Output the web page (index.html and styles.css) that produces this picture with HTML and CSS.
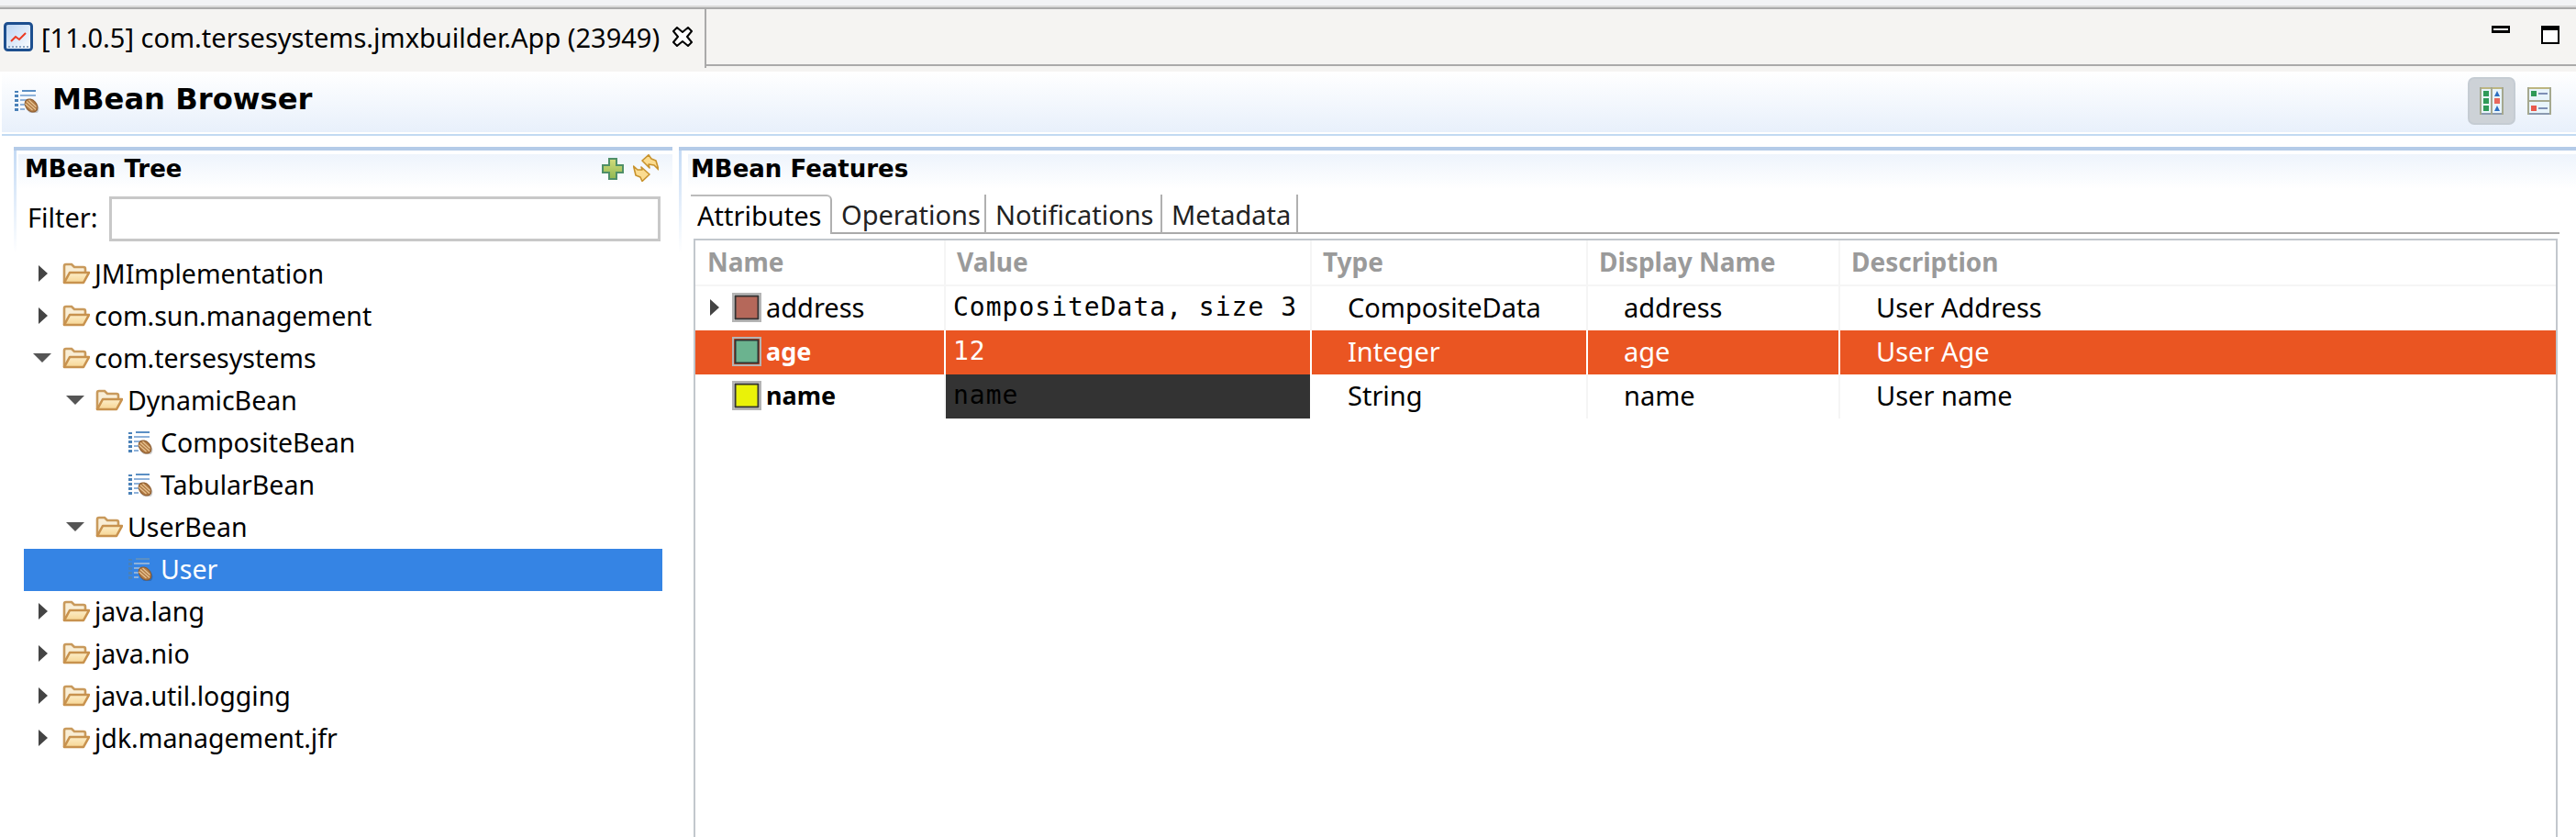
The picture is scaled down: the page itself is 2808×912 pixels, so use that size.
FILE: index.html
```html
<!DOCTYPE html>
<html lang="en">
<head>
<meta charset="utf-8">
<title>MBean Browser</title>
<link rel="stylesheet" href="styles.css">
</head>
<body>
<svg class="defs" width="0" height="0" aria-hidden="true">
  <defs>
    <linearGradient id="fold" x1="0" y1="0" x2="0" y2="1"><stop offset="0" stop-color="#fdeec9"/><stop offset="1" stop-color="#f6d593"/></linearGradient>
    <linearGradient id="chart" x1="0" y1="0" x2="1" y2="1"><stop offset="0" stop-color="#b9d3f2"/><stop offset="1" stop-color="#ffffff"/></linearGradient>
    <linearGradient id="plus" x1="0" y1="0" x2="0" y2="1"><stop offset="0" stop-color="#d3dc7c"/><stop offset="1" stop-color="#8fb850"/></linearGradient>
    <symbol id="folder" viewBox="0 0 30 24">
      <path d="M2 22V4q0-2 2-2h6l3 3h10q2 0 2 2v4" fill="#f9eed6" stroke="#c99a5c" stroke-width="2.6"/>
      <path d="M2 22l6-11h21l-6 11z" fill="url(#fold)" stroke="#c8924e" stroke-width="2.6" stroke-linejoin="round"/>
    </symbol>
    <symbol id="bean" viewBox="0 0 28 25">
      <g fill="#4a81b8">
        <rect x="8" y="0" width="15" height="2" fill="#5b8fc4"/><rect x="0" y="1" width="4" height="2"/>
        <rect x="0" y="5" width="4" height="3"/><rect x="6" y="5" width="17" height="2" fill="#8fb2da"/>
        <rect x="0" y="10" width="4" height="3"/><rect x="6" y="10" width="13" height="2" fill="#8fb2da"/>
        <rect x="0" y="15" width="4" height="3"/><rect x="6" y="15" width="5" height="2" fill="#8fb2da"/>
        <rect x="0" y="20" width="4" height="3"/><rect x="6" y="20" width="5" height="2" fill="#8fb2da"/>
      </g>
      <ellipse cx="19" cy="18.5" rx="6.5" ry="8.5" transform="rotate(-42 19 18.5)" fill="#000" opacity=".18"/>
      <ellipse cx="18" cy="17" rx="5.8" ry="8" transform="rotate(-42 18 17)" fill="#b07a44" stroke="#8d5c2f" stroke-width="1"/>
      <path d="M13 12.5l10 9M15.5 11l8 7.5M11.500 15l8 7" stroke="#e8c391" stroke-width="1.3" fill="none"/>
    </symbol>
    <symbol id="swatch" viewBox="0 0 32 32">
      <rect x="1" y="1" width="30" height="30" fill="none" stroke="#b4b4b4" stroke-width="2"/>
      <rect x="3.500" y="3.500" width="25" height="25" fill="currentColor" stroke="#333" stroke-width="2"/>
    </symbol>
  </defs>
</svg>

<div class="strip"></div>
<div class="tabbar">
  <div class="editor-tab">
    <svg class="tab-icon" viewBox="0 0 32 32" width="32" height="32">
      <rect x="1.500" y="1.500" width="29" height="29" rx="3" fill="url(#chart)" stroke="#1d4f8f" stroke-width="3"/>
      <path d="M5 27h22" stroke="#8da6c4" stroke-width="2" stroke-dasharray="2 2"/>
      <path d="M8 21l5-5 4 3 7-7" fill="none" stroke="#ec3a22" stroke-width="2"/>
    </svg>
    <span class="tab-title">[11.0.5] com.tersesystems.jmxbuilder.App (23949)</span>
    <svg class="tab-close" viewBox="0 0 22 22" width="22" height="22">
      <path d="M5 1l6 5 6-5 4 4-5 6 5 6-4 4-6-5-6 5-4-4 5-6-5-6z" fill="#fff" stroke="#000" stroke-width="2" stroke-linejoin="round"/>
    </svg>
  </div>
  <div class="tabbar-rest">
    <div class="window-btns">
      <span class="btn-min"></span>
      <span class="btn-max"></span>
    </div>
  </div>
</div>

<header class="form-head">
  <svg class="head-icon"><use href="#bean"/></svg>
  <h1 class="form-title">MBean Browser</h1>
  <div class="toggle active">
    <svg viewBox="0 0 26 30" width="26" height="30">
      <rect x="1" y="1" width="24" height="28" fill="#e8f4fb"/>
      <rect x="0" y="0" width="26" height="2" fill="#bdb682"/><rect x="0" y="28" width="26" height="2" fill="#8b9ab0"/>
      <rect x="0" y="0" width="2" height="30" fill="#a5a88f"/><rect x="24" y="0" width="2" height="30" fill="#a5a88f"/><rect x="12" y="0" width="2" height="30" fill="#a5a88f"/>
      <g fill="#2f9a58"><rect x="4" y="4" width="6" height="6"/><rect x="4" y="12" width="6" height="6"/><rect x="4" y="20" width="6" height="6"/></g>
      <path d="M16 10l3-6 3 6zM16 26l3-6 3 6z" fill="#2c6fc0"/><rect x="16" y="12" width="6" height="6" fill="#e8695c"/>
    </svg>
  </div>
  <div class="toggle">
    <svg viewBox="0 0 26 30" width="26" height="30">
      <rect x="1" y="1" width="24" height="28" fill="#e8f4fb"/>
      <rect x="0" y="0" width="26" height="2" fill="#bdb682"/><rect x="0" y="28" width="26" height="2" fill="#8b9ab0"/><rect x="0" y="14" width="26" height="2" fill="#a5a88f"/>
      <rect x="0" y="0" width="2" height="30" fill="#a5a88f"/><rect x="24" y="0" width="2" height="30" fill="#a5a88f"/>
      <rect x="4" y="4" width="6" height="6" fill="#2f9a58"/><rect x="12" y="6" width="10" height="2" fill="#7e8fb5"/>
      <rect x="4" y="20" width="6" height="6" fill="#e8594c"/><rect x="12" y="22" width="10" height="2" fill="#7e8fb5"/>
    </svg>
  </div>
</header>

<main class="panes">
  <section class="section tree-pane">
    <div class="section-head">
      <h2 class="section-title">MBean Tree</h2>
      <svg class="sec-plus" viewBox="0 0 24 24" width="24" height="24">
        <path d="M8 1h8v7h7v8h-7v7H8v-7H1V8h7z" fill="url(#plus)" stroke="#4f8f68" stroke-width="2"/>
      </svg>
      <svg class="sec-refresh" viewBox="0 0 28 30" width="28" height="30">
        <path d="M10 7L17 .8 20 5l5 2 3 10-5-5-6-1 1 4z" fill="#fbdc90" stroke="#c8922c" stroke-width="1.600" stroke-linejoin="round"/>
        <path d="M18 22l-8 7.500L8 25l-5-2L.6 13 5 17h5l-1-3z" fill="#fbdc90" stroke="#c8922c" stroke-width="1.600" stroke-linejoin="round"/>
      </svg>
    </div>
    <div class="filter">
      <label class="filter-label" for="flt">Filter:</label>
      <input class="filter-input" id="flt" type="text">
    </div>
    <ul class="tree">
      <li class="node lvl0"><i class="arrow right"></i><svg class="ico-folder"><use href="#folder"/></svg><span>JMImplementation</span></li>
      <li class="node lvl0"><i class="arrow right"></i><svg class="ico-folder"><use href="#folder"/></svg><span>com.sun.management</span></li>
      <li class="node lvl0"><i class="arrow down"></i><svg class="ico-folder"><use href="#folder"/></svg><span>com.tersesystems</span></li>
      <li class="node lvl1"><i class="arrow down"></i><svg class="ico-folder"><use href="#folder"/></svg><span>DynamicBean</span></li>
      <li class="node lvl2"><svg class="ico-bean"><use href="#bean"/></svg><span>CompositeBean</span></li>
      <li class="node lvl2"><svg class="ico-bean"><use href="#bean"/></svg><span>TabularBean</span></li>
      <li class="node lvl1"><i class="arrow down"></i><svg class="ico-folder"><use href="#folder"/></svg><span>UserBean</span></li>
      <li class="node lvl2 selected"><svg class="ico-bean"><use href="#bean"/></svg><span>User</span></li>
      <li class="node lvl0"><i class="arrow right"></i><svg class="ico-folder"><use href="#folder"/></svg><span>java.lang</span></li>
      <li class="node lvl0"><i class="arrow right"></i><svg class="ico-folder"><use href="#folder"/></svg><span>java.nio</span></li>
      <li class="node lvl0"><i class="arrow right"></i><svg class="ico-folder"><use href="#folder"/></svg><span>java.util.logging</span></li>
      <li class="node lvl0"><i class="arrow right"></i><svg class="ico-folder"><use href="#folder"/></svg><span>jdk.management.jfr</span></li>
    </ul>
  </section>

  <section class="section feature-pane">
    <div class="section-head">
      <h2 class="section-title">MBean Features</h2>
    </div>
    <nav class="tabs">
      <span class="tab tab-attr active">Attributes</span>
      <span class="tab tab-oper">Operations</span>
      <span class="tab tab-noti">Notifications</span>
      <span class="tab tab-meta">Metadata</span>
      <span class="tabs-rest"></span>
    </nav>
    <div class="table">
      <div class="row head">
        <div class="cell">Name</div><div class="cell">Value</div><div class="cell">Type</div><div class="cell">Display Name</div><div class="cell">Description</div>
      </div>
      <div class="row">
        <div class="cell name"><i class="arrow right small"></i><svg class="swatch c-address"><use href="#swatch"/></svg><span>address</span></div>
        <div class="cell mono">CompositeData, size 3</div>
        <div class="cell ind">CompositeData</div><div class="cell ind">address</div><div class="cell ind">User Address</div>
      </div>
      <div class="row selected">
        <div class="cell name"><i class="arrow none"></i><svg class="swatch c-age"><use href="#swatch"/></svg><b>age</b></div>
        <div class="cell mono">12</div>
        <div class="cell ind">Integer</div><div class="cell ind">age</div><div class="cell ind">User Age</div>
      </div>
      <div class="row">
        <div class="cell name"><i class="arrow none"></i><svg class="swatch c-name"><use href="#swatch"/></svg><b>name</b></div>
        <div class="cell mono dark">name</div>
        <div class="cell ind">String</div><div class="cell ind">name</div><div class="cell ind">User name</div>
      </div>
    </div>
  </section>
</main>
</body>
</html>
```
FILE: styles.css
```css
* { box-sizing: border-box; }
html, body { margin: 0; padding: 0; }
body {
  width: 2808px; height: 912px; overflow: hidden; background: #fff;
  font-family: "Noto Sans", "Open Sans", sans-serif; font-size: 29px; color: #000;
  display: flex; flex-direction: column;
}
.defs { position: absolute; }
.strip { height: 8px; background: #f2f3f5; border-bottom: 2px solid #d9d9d9; flex: none; }

.tabbar { display: flex; height: 70px; flex: none; background: #f5f4f2; }
.editor-tab {
  width: 770px; height: 70px; display: flex; align-items: center; padding: 0 0 8px 4px;
  border-top: 2px solid #aaa; border-right: 2px solid #aaa;
  border-image: linear-gradient(#aaa 64px, #f5f4f2 64px) 2;
  border-left: 0; border-bottom: 0;
}
.tab-icon { flex: none; margin-right: 9px; }
.tab-title { white-space: nowrap; flex: none; width: 666px; }
.tab-close { flex: none; margin-left: 22px; }
.tabbar-rest { flex: 1; height: 64px; border-top: 2px solid #aaa; border-bottom: 2px solid #aaa; position: relative; }
.window-btns { display: flex; justify-content: flex-end; align-items: flex-start; gap: 34px; padding: 18px 18px 0 0; }
.btn-min { width: 20px; height: 8px; border: 2px solid #000; border-width: 3px 2px; background: #fff; }
.btn-max { width: 20px; height: 20px; border: 2px solid #000; border-top-width: 5px; background: #fff; }

.form-head {
  height: 70px; flex: none; margin-left: 2px; display: flex; align-items: center; padding: 0 14px 4px 14px;
  background: linear-gradient(#fff, #e8f0fb 66px, #fff 66px);
  border-bottom: 2px solid #c2daf2;
}
.head-icon { width: 28px; height: 25px; flex: none; }
.form-title { font: bold 32.2px/36px "DejaVu Sans", sans-serif; margin: 0 0 4px 13px; flex: 1; }
.toggle { width: 52px; height: 52px; display: flex; align-items: center; justify-content: center; border-radius: 7px; border: 2px solid transparent; flex: none; }
.toggle.active { background: #cdd2d7; border-color: #c5ccd3; }

.panes { flex: 1; display: flex; padding-top: 12px; min-height: 0; }
.section {
  border-top: 4px solid; border-image: linear-gradient(#b4cbe8 50%, #80848a 50%) 4;
  background: linear-gradient(#c5dbf5, #fff) left top / 3px 112px no-repeat;
  display: flex; flex-direction: column;
}
.tree-pane { width: 718px; margin-left: 15px; flex: none; }
.feature-pane { flex: 1; margin-left: 7px; min-width: 0; border-image: linear-gradient(#b4cbe8 50%, #a4a8ae 50%) 4; }
.section-head {
  height: 38px; margin: 4px 0 0 5px; display: flex; align-items: flex-start; flex: none;
  background: linear-gradient(#eef4fc, #fff);
}
.section-title { margin: 0 0 0 7px; font: bold 26px/32px "DejaVu Sans", sans-serif; flex: 1; }
.sec-plus { margin-top: 4px; flex: none; }
.sec-refresh { margin: 0 15px 0 10px; flex: none; }
.feature-pane .section-head { margin-left: 10px; }
.feature-pane .section-title { margin-left: 3px; }

.filter { display: flex; align-items: center; height: 49px; margin: 8px 0 0 15px; flex: none; }
.filter-label { width: 89px; flex: none; padding-bottom: 4px; }
.filter-input { width: 601px; height: 49px; border: 3px solid #c8c8c8; background: #fff; outline: 0; padding: 0; }

.tree { list-style: none; margin: 13px 0 0 11px; padding: 0; width: 696px; font-size: 28.5px; }
.node { height: 46px; display: flex; align-items: center; white-space: nowrap; padding-bottom: 2px; }
.lvl0 { padding-left: 10px; }
.lvl1 { padding-left: 46px; }
.lvl2 { padding-left: 114px; }
.node.selected { background: #3584e4; color: #fff; }
.arrow { width: 20px; height: 20px; flex: none; display: block; }
.arrow.right { width: 0; height: 0; border-style: solid; border-width: 9px 0 9px 10px; border-color: transparent transparent transparent #444; margin: 0 5px 0 6px; }
.arrow.down { width: 0; height: 0; border-style: solid; border-width: 10px 10px 0 10px; border-color: #555 transparent transparent transparent; margin: 0 2px 0 0; }
.lvl0 .arrow.right { margin-right: 6px; }
.ico-folder { width: 30px; height: 24px; margin: 0 5px 0 10px; flex: none; }
.ico-bean { width: 28px; height: 25px; margin-right: 7px; flex: none; }

.tabs { display: flex; height: 43px; margin: 6px 0 0 13px; flex: none; line-height: 44px; }
.tab { padding: 0 7px 0 10px; border-right: 2px solid #b0b0b0; border-bottom: 2px solid #aaa; color: #222; white-space: nowrap; }
.tab.active { border-top: 2px solid #bbb; border-bottom: 0; border-top-right-radius: 6px; line-height: 42px; padding-left: 7px; color: #000; }
.tab-attr { width: 154px; }
.tab-oper { width: 168px; }
.tab-noti { width: 192px; }
.tab-meta { width: 148px; }
.tabs-rest { width: 1375px; border-bottom: 2px solid #aaa; flex: none; }

.table { flex: 1; margin: 5px 20px 0 16px; border: 2px solid #c2c7cd; border-bottom: 0; }
.row { display: grid; grid-template-columns: 273px 399px 301px 275px 1fr; height: 48px; }
.cell { border-right: 2px solid #f5f5f5; display: flex; align-items: center; white-space: nowrap; padding-bottom: 3px; min-width: 0; }
.cell:last-child { border-right: 0; }
.row.head { height: 50px; border-bottom: 2px solid #f5f5f5; color: #9a9a9a; font-size: 28px; font-weight: bold; }
.row.head .cell { padding-left: 12px; }
.row.head .cell:first-child { padding-left: 13px; }
.cell.name { padding-left: 16px; }
.cell.name b { font-size: 27px; }
.cell.ind { padding-left: 39px; }
.cell.mono { font-family: "DejaVu Sans Mono", monospace; font-size: 28px; padding-left: 8px; letter-spacing: 1px; }
.cell.dark { background: #333; border-right-color: #fff; }
.row.selected { background: #ea5522; color: #fff; }
.row.selected .cell { border-right-color: #fff; }
.arrow.small { border-width: 9px 0 9px 10px; margin: 0 14px 0 0; }
.arrow.none { width: 10px; height: 0; margin-right: 14px; }
.swatch { width: 32px; height: 32px; margin-right: 5px; flex: none; }
.c-address { color: #b5685a; }
.c-age { color: #6bb38f; }
.c-name { color: #eaf208; }
```
